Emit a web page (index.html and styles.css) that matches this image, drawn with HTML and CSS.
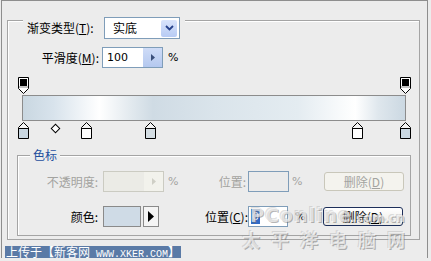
FILE: index.html
```html
<!DOCTYPE html>
<html lang="zh-CN">
<head>
  <meta charset="UTF-8"/>
  <title>渐变编辑器</title>
  <link rel="stylesheet" href="styles.css">
</head>
<body>
  <div class="frame">
    <div class="group">
      <div class="group-head">
        <span class="lbl type-lbl">渐变类型(<u>T</u>):</span>
        <div class="combo">
          <span class="combo-val">实底</span>
          <span class="combo-btn">
            <svg width="9" height="6" viewBox="0 0 9 6"><path d="M1 1 L4.5 4.5 L8 1" fill="none" stroke="#26418a" stroke-width="1.8"/></svg>
          </span>
        </div>
      </div>

      <div class="row smooth">
        <span class="lbl smooth-lbl">平滑度(<u>M</u>):</span>
        <div class="spin">
          <span class="spin-val">100</span>
          <span class="spin-btn"><svg width="4" height="7" viewBox="0 0 4 7"><path d="M0 0 L4 3.5 L0 7 Z" fill="#3a4f7a"/></svg></span>
        </div>
        <span class="pct">%</span>
      </div>

      <div class="ramp">
        <div class="track top">
          <svg class="stop" style="left:0%" width="11" height="17" viewBox="0 0 11 17">
            <path d="M0.5 0.5 H10.5 V11.5 L5.5 16.5 L0.5 11.5 Z" fill="#fff" stroke="#000"/>
            <rect x="2" y="2" width="7" height="7" fill="#000"/>
            <path d="M1 10 H10" stroke="#888"/>
          </svg>
          <svg class="stop" style="left:100%" width="11" height="17" viewBox="0 0 11 17">
            <path d="M0.5 0.5 H10.5 V11.5 L5.5 16.5 L0.5 11.5 Z" fill="#fff" stroke="#000"/>
            <rect x="2" y="2" width="7" height="7" fill="#000"/>
            <path d="M1 10 H10" stroke="#888"/>
          </svg>
        </div>
        <div class="bar"></div>
        <div class="track bottom">
          <svg class="stop" style="left:0%" width="11" height="17" viewBox="0 0 11 17">
            <path d="M5.5 0.5 L10.5 5.5 V16.5 H0.5 V5.5 Z" fill="#f4f4f4" stroke="#000"/>
            <rect x="1" y="7" width="9" height="9" fill="#c9d6e0"/>
            <path d="M1 6.5 H10" stroke="#000"/>
          </svg>
          <span class="mid" style="left:8.4%"></span>
          <svg class="stop" style="left:16.5%" width="11" height="17" viewBox="0 0 11 17">
            <path d="M5.5 0.5 L10.5 5.5 V16.5 H0.5 V5.5 Z" fill="#f4f4f4" stroke="#000"/>
            <rect x="1" y="7" width="9" height="9" fill="#ffffff"/>
            <path d="M1 6.5 H10" stroke="#000"/>
          </svg>
          <svg class="stop" style="left:33.2%" width="11" height="17" viewBox="0 0 11 17">
            <path d="M5.5 0.5 L10.5 5.5 V16.5 H0.5 V5.5 Z" fill="#f4f4f4" stroke="#000"/>
            <rect x="1" y="7" width="9" height="9" fill="#d4dde3"/>
            <path d="M1 6.5 H10" stroke="#000"/>
          </svg>
          <svg class="stop" style="left:87.4%" width="11" height="17" viewBox="0 0 11 17">
            <path d="M5.5 0.5 L10.5 5.5 V16.5 H0.5 V5.5 Z" fill="#f4f4f4" stroke="#000"/>
            <rect x="1" y="7" width="9" height="9" fill="#ffffff"/>
            <path d="M1 6.5 H10" stroke="#000"/>
          </svg>
          <svg class="stop" style="left:100%" width="11" height="17" viewBox="0 0 11 17">
            <path d="M5.5 0.5 L10.5 5.5 V16.5 H0.5 V5.5 Z" fill="#f4f4f4" stroke="#000"/>
            <rect x="1" y="7" width="9" height="9" fill="#cbd8e2"/>
            <path d="M1 6.5 H10" stroke="#000"/>
          </svg>
        </div>
      </div>

      <div class="stops">
        <span class="stops-title">色标</span>
        <div class="srow first">
          <span class="lbl l1 off">不透明度:</span>
          <div class="spin off">
            <span class="spin-val"></span>
            <span class="spin-btn"><svg width="4" height="7" viewBox="0 0 4 7"><path d="M0 0 L4 3.5 L0 7 Z" fill="#cfcfc6"/></svg></span>
          </div>
          <span class="pct p1 off">%</span>
          <span class="lbl l2 off">位置:</span>
          <span class="field f1"></span>
          <span class="pct p2 off">%</span>
          <span class="btn off">删除(<u>D</u>)</span>
        </div>
        <div class="srow">
          <span class="lbl l1">颜色:</span>
          <span class="swatch"></span>
          <span class="pick"><svg width="6" height="11" viewBox="0 0 6 11"><path d="M0 0 L6 5.5 L0 11 Z" fill="#000"/></svg></span>
          <span class="lbl l3">位置(<u>C</u>):</span>
          <span class="field f2"><span class="sel">0</span></span>
          <span class="pct p3">%</span>
          <span class="btn focus">删除(<u>D</u>)</span>
        </div>
      </div>
    </div>

    <div class="caption">上传于【新客网<span class="mono"> WWW.XKER.COM</span>】</div>
  </div>

  <div class="mark">
    <div class="mark-en">PConline<small>.com.cn</small></div>
    <div class="mark-cn">太平洋电脑网</div>
  </div>
</body>
</html>
```

FILE: styles.css
```css
body { margin:0; width:431px; height:261px; background:#ececec; font-family:"Noto Sans CJK SC", sans-serif; font-size:12px; line-height:14px; color:#000; overflow:hidden; position:relative; }
u { text-decoration:underline; text-underline-offset:1px; }

.frame { margin-left:1px; width:427px; height:258px; border:1px solid #8e8e8e; border-bottom:none; box-sizing:border-box; display:flex; flex-direction:column; }

.group { margin:19px 7px 0 5px; height:218px; border:1px solid #a4a4a4; box-shadow:inset 1px 1px 0 #fff; }
.group-head { display:inline-flex; align-items:center; margin:-9px 0 0 15px; padding:0 5px 0 4px; background:#ececec; }
.lbl { white-space:nowrap; }
.type-lbl { width:77px; }
.combo { width:76px; height:22px; box-sizing:border-box; border:1px solid #7f9db9; background:#fff; display:flex; align-items:center; justify-content:space-between; padding:0 2px 0 8px; }
.combo-btn { width:16px; height:17px; background:linear-gradient(#d9e4fb,#b7cbf4); border-radius:2px; display:flex; align-items:center; justify-content:center; }

.row { display:flex; align-items:center; }
.smooth { margin-top:8px; }
.smooth-lbl { width:91px; text-align:right; margin-right:3px; }
.spin { width:61px; height:21px; box-sizing:border-box; border:1px solid #7f9db9; background:#fff; display:flex; }
.spin-val { flex:1; padding-left:4px; font:11px/19px "DejaVu Sans", sans-serif; }
.spin-btn { width:19px; background:linear-gradient(#cfdcf7,#b4c8ef); display:flex; align-items:center; justify-content:center; }
.pct { font:11px/14px "DejaVu Sans", sans-serif; }
.smooth .pct { margin-left:5px; }

.ramp { margin:9px 0 0 10px; width:393px; }
.track { position:relative; margin-left:5px; width:382px; height:17px; }
.stop { position:absolute; top:0; margin-left:-5px; }
.mid { position:absolute; top:3px; width:5px; height:5px; margin-left:-3px; border:1px solid #000; background:#fff; transform:rotate(45deg); }
.bar { margin:1px 0 1px 4px; width:384px; height:26px; box-sizing:border-box; border:1px solid #8c8c8c; background:linear-gradient(to right,#c9d7e1 0%,#d8e3ec 8%,#ffffff 20%,#e3eaef 28%,#cfdbe4 34%,#dae4eb 50%,#e4ecf1 72%,#ffffff 87%,#dfe7ed 93%,#cbd8e2 100%); }

.stops { margin:16px 0 0 9px; width:394px; height:81px; box-sizing:border-box; border:1px solid #a4a4a4; box-shadow:inset 1px 1px 0 #fff; padding-bottom:8px; }
.stops-title { display:inline-block; margin:-8px 0 0 12px; padding:0 3px; background:#ececec; color:#1f4f9e; vertical-align:top; }
.srow { display:flex; align-items:center; height:21px; }
.srow.first { margin-top:1px; }
.srow + .srow { margin-top:14px; }
.l1 { width:80px; text-align:right; margin-right:5px; }
.off { color:#a3a3a0; }
.spin.off { border-color:#cbcbc2; background:#ebebe6; }
.spin.off .spin-btn { background:#f2f2ec; }
.p1 { margin-left:4px; width:20px; }
.l2 { width:58px; text-align:right; margin-right:2px; }
.field { width:41px; height:21px; box-sizing:border-box; border:1px solid #7f9db9; display:flex; align-items:center; padding-left:2px; }
.f1 { background:#ebebeb; }
.f2 { width:40px; background:#fff; }
.sel { background:#316ac5; color:#fff; font:11px/15px "DejaVu Sans", sans-serif; padding:0 1px; }
.p2 { margin-left:3px; width:32px; }
.p3 { margin-left:7px; width:28px; }
.btn { width:80px; height:19px; box-sizing:border-box; border:1px solid #1d2f5a; border-radius:3px; background:linear-gradient(#fff,#ecebe6); display:flex; align-items:center; justify-content:center; font-size:12px; }
.btn.off { border-color:#c9c7ba; background:#f4f3ee; }
.swatch { width:38px; height:21px; box-sizing:border-box; border:1px solid #8a8a8a; background:#cfdbe6; margin-right:2px; }
.pick { width:16px; height:21px; box-sizing:border-box; border:1px solid #8a8a8a; background:#f4f4f4; display:flex; align-items:center; justify-content:center; }
.l3 { width:89px; text-align:right; }

.caption { margin:6px 0 0 3px; align-self:flex-start; height:12px; padding:0 1px; background:#5a7aa6; color:#fff; font-size:12px; line-height:12px; white-space:nowrap; }
.mono { font:10px/12px "Liberation Mono", monospace; }

.mark { position:absolute; left:250px; top:204px; white-space:nowrap; color:rgba(255,255,255,0.65); text-shadow:1px 1px 0 rgba(110,110,110,0.5), -1px -1px 0 rgba(150,150,150,0.3); pointer-events:none; }
.mark-en { font:bold 19px/22px "DejaVu Sans", sans-serif; letter-spacing:1px; }
.mark-en small { font-size:12px; letter-spacing:0; }
.mark-cn { margin:0 0 0 -8px; font:bold 18px/20px "Noto Sans CJK SC", sans-serif; letter-spacing:11px; }
```
